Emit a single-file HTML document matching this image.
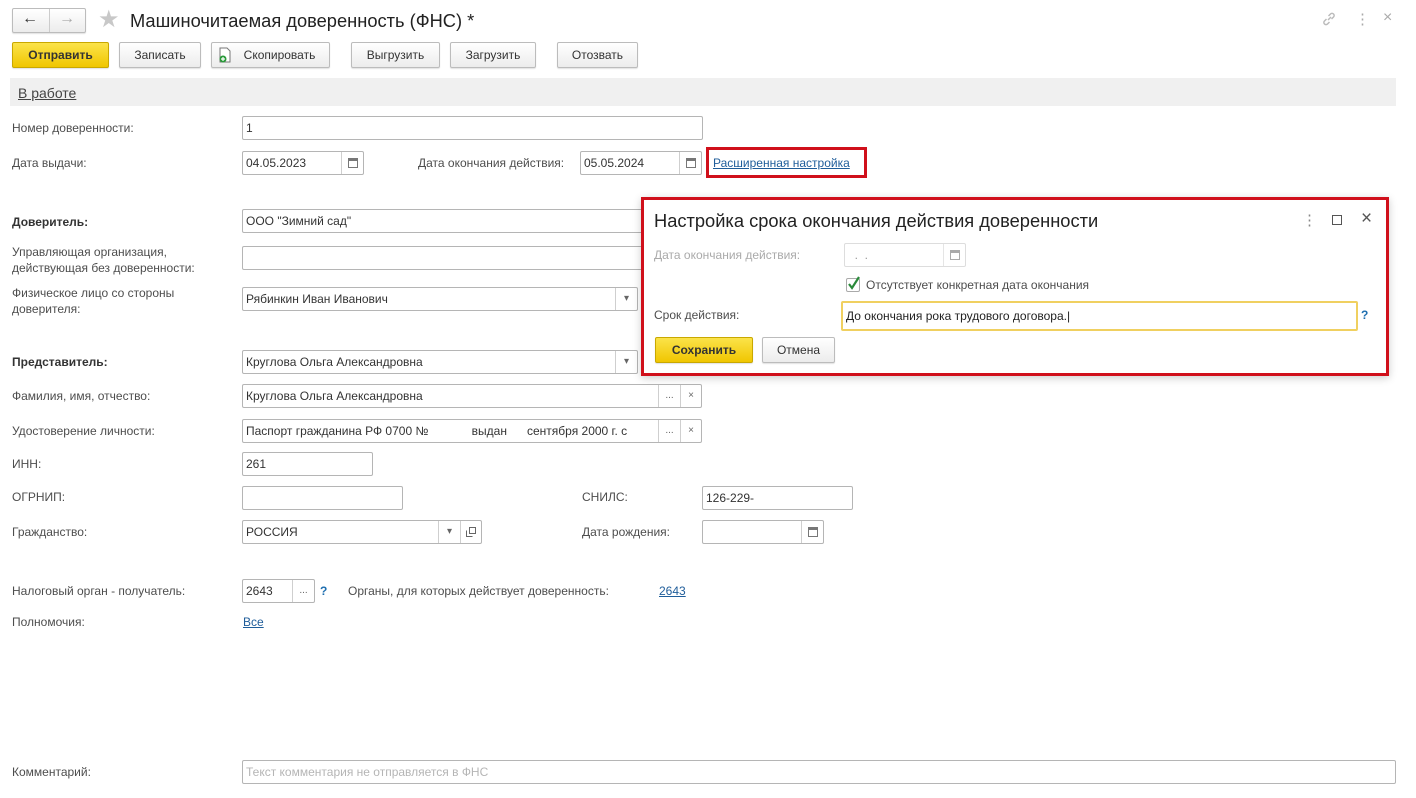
<!DOCTYPE html>
<html><head><meta charset="utf-8">
<style>
*{box-sizing:border-box;margin:0;padding:0}
body{width:1416px;height:798px;background:#fff;font-family:"Liberation Sans",Arial,sans-serif;font-size:12px;color:#4d4d4d;position:relative;overflow:hidden}
.a{position:absolute;white-space:nowrap}
.t{position:absolute;white-space:nowrap;line-height:14px}
.in{position:absolute;border:1px solid #b5b5b5;border-radius:2px;background:#fff;height:24px;color:#333;padding-left:3px;line-height:22px;overflow:hidden;white-space:nowrap}
.btn{position:absolute;height:26px;border:1px solid #bcbcbc;border-radius:2px;background:linear-gradient(#fff,#ececec);text-align:center;line-height:24px;color:#333;box-shadow:0 1px 1px rgba(0,0,0,.12)}
.yb{background:linear-gradient(#fbe34a,#f0c600);border-color:#c9a800;font-weight:bold;color:#333}
.sb{position:absolute;top:0;bottom:0;width:22px;border-left:1px solid #cfcfcf;text-align:center;color:#666;font-size:10px;line-height:22px}
.cal{position:absolute;left:6px;top:6px;width:10px;height:10px;border:1px solid #777;border-top-width:3px}
.lnk{color:#1f5d9a;text-decoration:underline}
.b{font-weight:bold;color:#333}
</style></head><body>
<!-- header -->
<div class="btn" style="left:12px;top:8px;width:74px;height:25px"></div>
<div class="a" style="left:49px;top:9px;width:1px;height:23px;background:#ccc"></div>
<div class="a" style="left:22px;top:10px;font-size:16px;color:#333">&#8592;</div>
<div class="a" style="left:59px;top:10px;font-size:16px;color:#aaa">&#8594;</div>
<div class="a" style="left:98px;top:5px;font-size:24px;color:#c8c8c8">&#9733;</div>
<div class="a" style="left:130px;top:10px;font-size:18.3px;color:#222">Машиночитаемая доверенность (ФНС) *</div>
<svg class="a" style="left:1321px;top:11px" width="16" height="16"><path d="M7 9l3-3M5.5 8L3.5 10a2.1 2.1 0 003 3L8.5 11M10.5 8l2-2a2.1 2.1 0 00-3-3L7.5 5" fill="none" stroke="#bbb" stroke-width="1.5"/></svg>
<div class="a" style="left:1355px;top:10px;font-size:15px;color:#aaa">&#8942;</div>
<div class="a" style="left:1383px;top:9px;font-size:16px;color:#aaa">&#215;</div>
<!-- toolbar -->
<div class="btn yb" style="left:12px;top:42px;width:97px">Отправить</div>
<div class="btn" style="left:119px;top:42px;width:82px">Записать</div>
<div class="btn" style="left:211px;top:42px;width:119px;padding-left:18px">Скопировать</div>
<svg class="a" style="left:218px;top:47px" width="14" height="16"><path d="M2 1h7l3 3v11H2z" fill="#fff" stroke="#777"/><circle cx="5" cy="12" r="3.5" fill="#2a9a3a"/><path d="M5 10v4M3 12h4" stroke="#fff" stroke-width="1.2"/></svg>
<div class="btn" style="left:351px;top:42px;width:89px">Выгрузить</div>
<div class="btn" style="left:450px;top:42px;width:86px">Загрузить</div>
<div class="btn" style="left:557px;top:42px;width:81px">Отозвать</div>
<div class="a" style="left:10px;top:78px;width:1386px;height:28px;background:#f0f0f0"></div>
<div class="t lnk" style="left:18px;top:86px;font-size:14px;color:#444">В работе</div>
<!-- form -->
<div class="t" style="left:12px;top:121px">Номер доверенности:</div>
<div class="in" style="left:242px;top:116px;width:461px">1</div>
<div class="t" style="left:12px;top:156px">Дата выдачи:</div>
<div class="in" style="left:242px;top:151px;width:122px">04.05.2023<div class="sb" style="right:0"><div class="cal"></div></div></div>
<div class="t" style="left:418px;top:156px">Дата окончания действия:</div>
<div class="in" style="left:580px;top:151px;width:122px">05.05.2024<div class="sb" style="right:0"><div class="cal"></div></div></div>
<div class="a" style="left:706px;top:147px;width:161px;height:31px;border:3px solid #d0101b"></div>
<div class="t lnk" style="left:713px;top:156px">Расширенная настройка</div>

<div class="t b" style="left:12px;top:215px">Доверитель:</div>
<div class="in" style="left:242px;top:209px;width:420px">ООО "Зимний сад"</div>
<div class="t" style="left:12px;top:244px;line-height:16px">Управляющая организация,<br>действующая без доверенности:</div>
<div class="in" style="left:242px;top:246px;width:420px"></div>
<div class="t" style="left:12px;top:285px;line-height:16px">Физическое лицо со стороны<br>доверителя:</div>
<div class="in" style="left:242px;top:287px;width:396px">Рябинкин Иван Иванович<div class="sb" style="right:0">&#9662;</div></div>
<div class="t b" style="left:12px;top:355px">Представитель:</div>
<div class="in" style="left:242px;top:350px;width:396px">Круглова Ольга Александровна<div class="sb" style="right:0">&#9662;</div></div>
<div class="t" style="left:12px;top:389px">Фамилия, имя, отчество:</div>
<div class="in" style="left:242px;top:384px;width:460px">Круглова Ольга Александровна<div class="sb" style="right:21px;background:#fff">...</div><div class="sb" style="right:0;width:21px">&#215;</div></div>
<div class="t" style="left:12px;top:424px">Удостоверение личности:</div>
<div class="in" style="left:242px;top:419px;width:460px">Паспорт гражданина РФ 0700 №&nbsp;&nbsp;&nbsp;&nbsp;&nbsp;&nbsp;&nbsp;&nbsp;&nbsp;&nbsp;&nbsp;&nbsp;&nbsp;выдан&nbsp;&nbsp;&nbsp;&nbsp;&nbsp;&nbsp;сентября 2000 г. с<div class="sb" style="right:21px;background:#fff">...</div><div class="sb" style="right:0;width:21px">&#215;</div></div>
<div class="t" style="left:12px;top:457px">ИНН:</div>
<div class="in" style="left:242px;top:452px;width:131px">261</div>
<div class="t" style="left:12px;top:490px">ОГРНИП:</div>
<div class="in" style="left:242px;top:486px;width:161px"></div>
<div class="t" style="left:582px;top:490px">СНИЛС:</div>
<div class="in" style="left:702px;top:486px;width:151px">126-229-</div>
<div class="t" style="left:12px;top:525px">Гражданство:</div>
<div class="in" style="left:242px;top:520px;width:240px">РОССИЯ<div class="sb" style="right:21px;background:#fff">&#9662;</div><div class="sb" style="right:0;width:21px"><svg width="10" height="10" style="margin-top:6px"><path d="M3.5 .5h6v6h-6zM.5 3.5v6h6" fill="none" stroke="#666"/></svg></div></div>
<div class="t" style="left:582px;top:525px">Дата рождения:</div>
<div class="in" style="left:702px;top:520px;width:122px"><div class="sb" style="right:0"><div class="cal"></div></div></div>
<div class="t" style="left:12px;top:584px">Налоговый орган - получатель:</div>
<div class="in" style="left:242px;top:579px;width:73px">2643<div class="sb" style="right:0">...</div></div>
<div class="t" style="left:320px;top:584px;color:#1f6fb0;font-weight:bold">?</div>
<div class="t" style="left:348px;top:584px">Органы, для которых действует доверенность:</div>
<div class="t lnk" style="left:659px;top:584px">2643</div>
<div class="t" style="left:12px;top:615px">Полномочия:</div>
<div class="t lnk" style="left:243px;top:615px">Все</div>
<div class="t" style="left:12px;top:765px">Комментарий:</div>
<div class="in" style="left:242px;top:760px;width:1154px;color:#b5b5b5">Текст комментария не отправляется в ФНС</div>

<!-- dialog -->
<div class="a" style="left:641px;top:197px;width:748px;height:179px;border:3px solid #d0101b;background:#fff;box-shadow:0 2px 8px rgba(0,0,0,.2)"></div>
<div class="a" style="left:654px;top:210px;font-size:18.3px;color:#222">Настройка срока окончания действия доверенности</div>
<div class="a" style="left:1302px;top:211px;font-size:15px;color:#888">&#8942;</div>
<div class="a" style="left:1332px;top:215px;width:10px;height:10px;border:1px solid #555"></div>
<div class="a" style="left:1361px;top:208px;font-size:19px;color:#555">&#215;</div>
<div class="t" style="left:654px;top:248px;color:#aaa">Дата окончания действия:</div>
<div class="in" style="left:844px;top:243px;width:122px;border-color:#ddd;color:#999">&nbsp;&nbsp;.&nbsp;&nbsp;.<div class="sb" style="right:0;border-color:#e5e5e5"><div class="cal" style="border-color:#aaa"></div></div></div>
<div class="a" style="left:846px;top:278px;width:14px;height:14px;border:1px solid #aaa;border-radius:2px;background:#fff"></div>
<svg class="a" style="left:846px;top:275px" width="16" height="16"><path d="M3 9l3 4 7-11" fill="none" stroke="#2a8a3a" stroke-width="2.2"/></svg>
<div class="t" style="left:866px;top:278px">Отсутствует конкретная дата окончания</div>
<div class="t" style="left:654px;top:308px">Срок действия:</div>
<div class="in" style="left:841px;top:301px;width:517px;height:30px;border:2px solid #f0d060;line-height:26px;color:#222">До окончания рока трудового договора.|</div>
<div class="t" style="left:1361px;top:308px;color:#1f6fb0;font-weight:bold">?</div>
<div class="btn yb" style="left:655px;top:337px;width:98px">Сохранить</div>
<div class="btn" style="left:762px;top:337px;width:73px">Отмена</div>
</body></html>
